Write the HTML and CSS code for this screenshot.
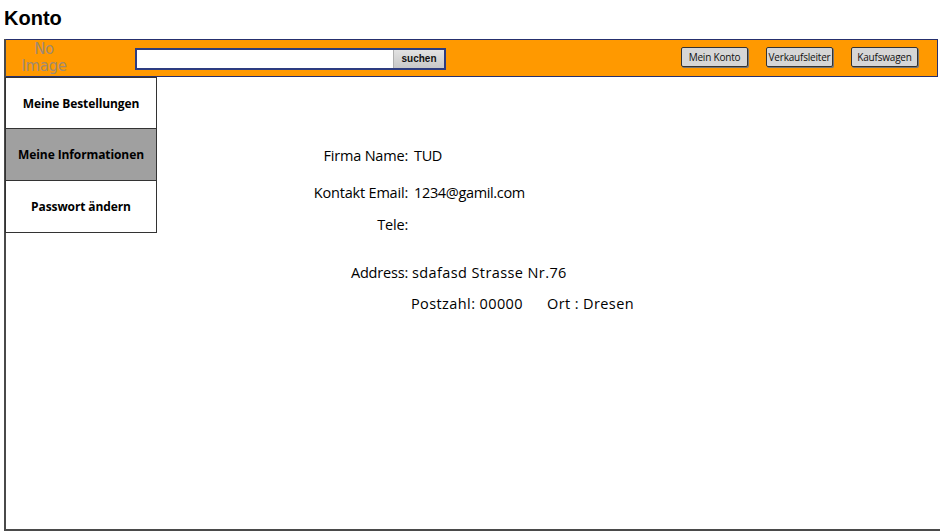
FILE: index.html
```html
<!DOCTYPE html>
<html lang="de">
<head>
<meta charset="utf-8">
<title>Konto</title>
<link rel="stylesheet" href="styles.css">
</head>
<body>
<h1 class="title">Konto</h1>
<div class="frame">
  <header class="topbar">
    <div class="logo">No<br>Image</div>
    <div class="search">
      <div class="search-input"></div>
      <div class="search-btn">suchen</div>
    </div>
    <nav class="actions">
      <span class="btn">Mein Konto</span>
      <span class="btn">Verkaufsleiter</span>
      <span class="btn">Kaufswagen</span>
    </nav>
  </header>
  <div class="main">
    <aside class="sidebar">
      <div class="side-item">Meine Bestellungen</div>
      <div class="side-item active">Meine Informationen</div>
      <div class="side-item">Passwort ändern</div>
    </aside>
    <section class="info">
      <div class="row r1"><span class="label">Firma Name:</span><span class="value">TUD</span></div>
      <div class="row r2"><span class="label">Kontakt Email:</span><span class="value">1234@gamil.com</span></div>
      <div class="row r3"><span class="label">Tele:</span><span class="value"></span></div>
      <div class="row r4"><span class="label">Address:</span><span class="value addr">sdafasd Strasse Nr.76</span></div>
      <div class="row r5"><span class="label"></span><span class="value post">Postzahl: 00000<span class="ort">Ort : Dresen</span></span></div>
    </section>
  </div>
</div>
</body>
</html>
```
FILE: styles.css
```css
* { box-sizing: border-box; }
html, body { margin: 0; padding: 0; background: #fff; overflow: hidden; }
body { width: 940px; height: 532px; }

.title {
  margin: 0;
  padding: 6px 0 0 4px;
  height: 39px;
  font: bold 20px/24px "Liberation Sans", Arial, sans-serif;
  color: #000;
}

.frame {
  margin-left: 4px;
  width: 950px;
  height: 492px;
  border-left: 2px solid #4a4a4a;
  border-bottom: 2px solid #4a4a4a;
  display: flex;
  flex-direction: column;
}

.topbar {
  height: 38px;
  width: 932px;
  background: #ff9900;
  border: 1px solid #26306e;
  border-left: none;
  display: flex;
  align-items: center;
}

.logo {
  width: 76px;
  text-align: center;
  font: 15px/17px "DejaVu Sans", Verdana, sans-serif;
  letter-spacing: -0.4px;
  color: #a08a70;
  align-self: flex-start;
  margin-top: 1px;
}

.search {
  margin-left: 53px;
  width: 311px;
  height: 22px;
  border: 2px solid #2d3c80;
  background: #fff;
  display: flex;
  justify-content: flex-end;
  margin-top: 1px;
}
.search-btn {
  width: 51px;
  height: 18px;
  background: linear-gradient(#e2e2e2, #c8c8c8);
  border-left: 1px solid #b0b0b0;
  font: bold 10px/18px "Liberation Sans", Arial, sans-serif;
  text-align: center;
  color: #111;
}
.search-input { flex: 1; }

.actions {
  margin-left: auto;
  margin-right: 19px;
  display: flex;
  gap: 18px;
  margin-top: -2px;
}
.btn {
  width: 67px;
  height: 20px;
  background: #d6d6d6;
  border: 1px solid #333;
  border-radius: 2px;
  box-shadow: 1px 1px 0 #777;
  font: 10px/18px "Comic Sans MS", "Open Sans", sans-serif;
  text-align: center;
  color: #111;
  white-space: nowrap;
  letter-spacing: -0.2px;
}

.main { display: flex; flex: 1; }

.sidebar {
  width: 152px;
  margin-left: -1px;
  display: flex;
  flex-direction: column;
}
.side-item {
  height: 52px;
  border: 1px solid #333;
  border-top-width: 0;
  background: #fff;
  display: flex;
  align-items: center;
  justify-content: center;
  font: bold 12px "Comic Sans MS", "Open Sans", sans-serif;
  color: #000;
  letter-spacing: -0.1px;
}
.side-item:first-child { border-top-width: 1px; }
.side-item.active { background: #a0a0a0; }

.info {
  display: flex;
  flex-direction: column;
  margin-left: 1px;
  font: 14.5px/20px "Comic Sans MS", "Open Sans", sans-serif;
  color: #000;
}
.row { display: flex; }
.label { width: 250px; text-align: right; letter-spacing: -0.2px; }
.value { margin-left: 6px; letter-spacing: -0.35px; }
.value.addr { margin-left: 4px; letter-spacing: 0.4px; }
.value.post { margin-left: 3px; letter-spacing: 0.4px; }
.ort { margin-left: 24px; }
.r1 { margin-top: 69px; }
.r2 { margin-top: 17px; }
.r3 { margin-top: 12px; }
.r4 { margin-top: 28px; }
.r5 { margin-top: 11px; }
```
